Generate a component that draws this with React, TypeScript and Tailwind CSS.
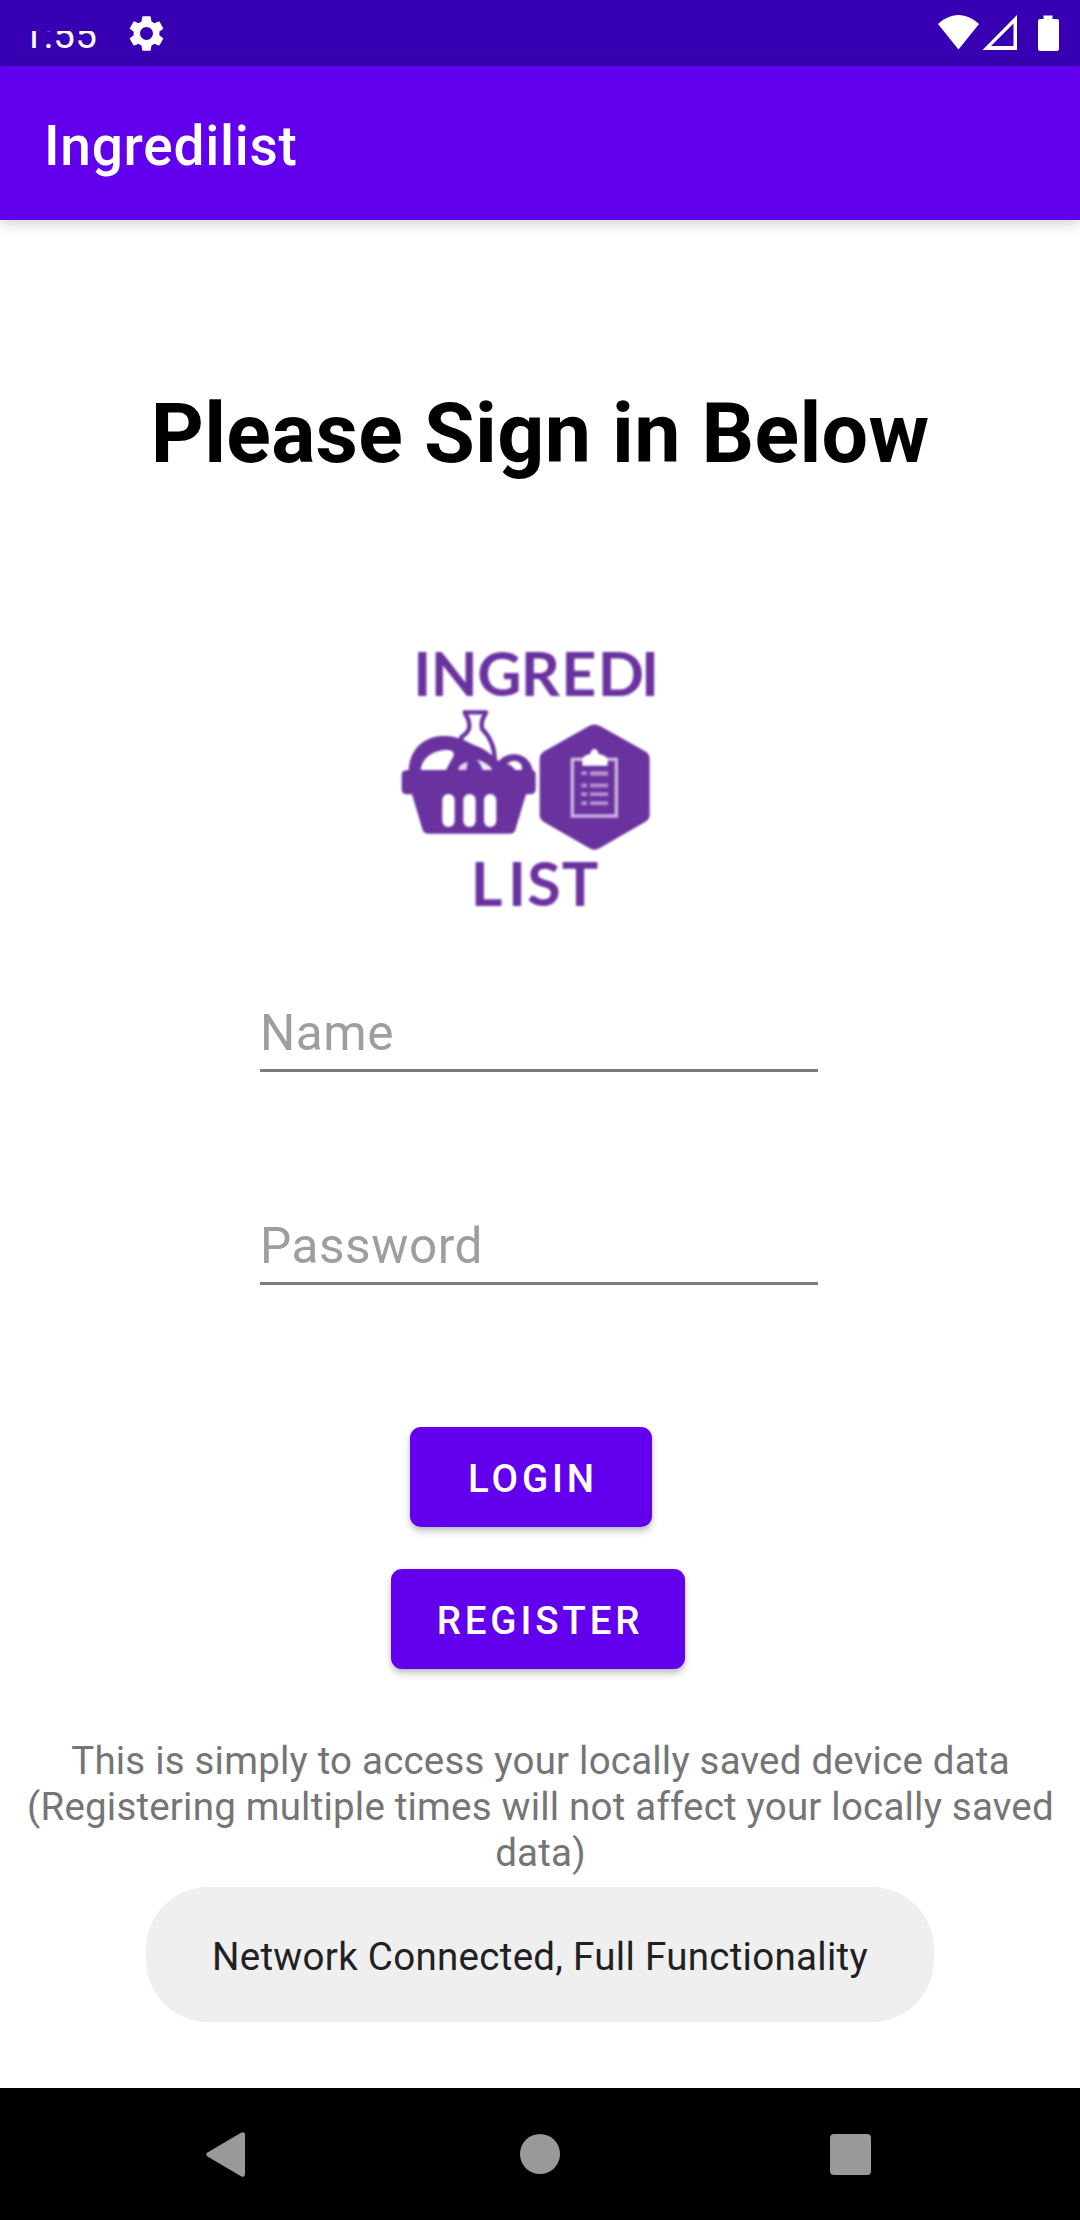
import React from "react";

function StatusBar() {
  return (
    <div className="flex h-[66px] shrink-0 items-start bg-[#3700b3] text-white">
      <div className="ml-[22px] mt-[31px] h-[30px] w-[85px] overflow-hidden">
        <div className="-mt-[19px] text-[38.5px] leading-[46px] tracking-[0.2px] whitespace-nowrap">1:55</div>
      </div>
      <svg className="ml-[18px] mt-[12px] size-[43px]" viewBox="0 0 24 24" fill="currentColor">
        <path d="M19.14 12.94c.04-.3.06-.61.06-.94 0-.32-.02-.64-.07-.94l2.03-1.58c.18-.14.23-.41.12-.61l-1.92-3.32c-.12-.22-.37-.29-.59-.22l-2.39.96c-.5-.38-1.03-.7-1.62-.94l-.36-2.54c-.04-.24-.24-.41-.48-.41h-3.84c-.24 0-.43.17-.47.41l-.36 2.54c-.59.24-1.13.57-1.62.94l-2.39-.96c-.22-.08-.47 0-.59.22L2.74 8.87c-.12.21-.08.47.12.61l2.03 1.58c-.05.3-.09.63-.09.94s.02.64.07.94l-2.03 1.58c-.18.14-.23.41-.12.61l1.92 3.32c.12.22.37.29.59.22l2.39-.96c.5.38 1.03.7 1.62.94l.36 2.54c.05.24.24.41.48.41h3.84c.24 0 .44-.17.47-.41l.36-2.54c.59-.24 1.13-.56 1.62-.94l2.39.96c.22.08.47 0 .59-.22l1.92-3.32c.12-.22.07-.47-.12-.61l-2.01-1.58zM12 15.6c-1.98 0-3.6-1.62-3.6-3.6s1.62-3.6 3.6-3.6 3.6 1.62 3.6 3.6-1.62 3.6-3.6 3.6z" />
      </svg>
      <svg className="ml-auto mr-[20px] mt-[15px] h-[37px] w-[122px]" viewBox="0 0 122 37" fill="currentColor">
        <path d="M0 9C6 3.500 13 0 20.500 0S35 3.500 41 9L20.500 34.500Z" />
        <path fillRule="evenodd" d="M44.500 35L79 0V35ZM53 31H75.500V8.500Z" />
        <path d="M105.500 .5H114.500V4H119Q121 4 121 6V34Q121 36 119 36H102Q100 36 100 34V6Q100 4 102 4H105.500Z" />
      </svg>
    </div>
  );
}

function Logo() {
  return (
    <svg className="size-[300px] blur-[1px]" viewBox="0 0 900 900" fill="#6a329f" role="img" aria-label="Ingredilist logo">
      <g fontFamily="Lato, sans-serif" fontWeight="700" fontSize="183">
        <text x="100 152 292 422 544 653 783" y="198">INGREDI</text>
        <text x="272 384 442 545" y="829">LIST</text>
      </g>
      {/* bottle behind the basket */}
      <path d="M254 247H318L314 256Q302 272 306 296Q345 335 344 392H244V322Q268 304 268 290Q268 268 258 256Z" fill="#fff" stroke="#6a329f" strokeWidth="13" strokeLinejoin="round" />
      {/* food and basket body */}
      <path d="M86 420C90 350 140 318 190 318C245 318 268 342 290 348C320 360 340 378 356 394C372 376 390 372 408 373C436 376 454 398 458 420Q467 424 467 434V478Q467 491 452 493H438L406 600Q403 611 390 611H145Q132 611 128 600L96 493H78Q65 491 65 478V434Q65 422 80 421Z" />
      <g fill="#fff">
        <path d="M122 420C126 380 165 358 205 360Q232 364 215 388L198 420Z" />
        <path d="M234 420Q238 400 262 396Q264 408 258 420Z" opacity="0.8" />
        <path d="M290 389Q326 398 337 420H308Q302 400 290 389Z" opacity="0.9" />
        <path d="M380 402Q404 384 421 400Q428 410 425 420H405Q398 406 380 402Z" />
        <rect x="187" y="492" width="37" height="99" rx="18" />
        <rect x="250" y="492" width="37" height="99" rx="18" />
        <rect x="312" y="492" width="37" height="99" rx="18" />
      </g>
      {/* clipboard inside the hexagon */}
      <path d="M627 288Q643 279 660 288L794 363Q809 371 809 386V555Q809 568 795 576L661 653Q643 665 626 653L493 577Q479 568 479 555V386Q479 372 493 364Z" />
      <rect x="577" y="388" width="132" height="170" fill="none" stroke="#cdb8df" strokeWidth="10" />
      <path d="M607 407V386Q612 375 630 373Q634 357 643 357T657 373Q676 375 683 386V407Z" fill="#fff" />
      <g fill="#b795d1">
        <rect x="604" y="424" width="17" height="11" /><rect x="630" y="424" width="54" height="13" />
        <rect x="604" y="461" width="17" height="11" /><rect x="630" y="461" width="54" height="11" />
        <rect x="604" y="487" width="17" height="11" /><rect x="630" y="487" width="54" height="11" />
        <rect x="604" y="514" width="17" height="11" /><rect x="630" y="514" width="54" height="11" />
      </g>
    </svg>
  );
}

function Field({ label, type }: { label: string; type: string }) {
  return (
    <div className="w-[558px]">
      <input
        type={type}
        placeholder={label}
        className="block h-[58px] w-full bg-transparent p-0 text-[49.5px] leading-[58px] tracking-[0.55px] text-[#212121] outline-none placeholder:text-[#9e9e9e]"
      />
      <div className="mt-[7px] h-[3px] bg-[#7c7c7c]" />
    </div>
  );
}

const buttonClass =
  "h-[100px] rounded-[11px] bg-[#6200ee] pl-[4px] pt-[3px] text-[38.5px] leading-[46px] font-medium tracking-[3.85px] text-white shadow-[0_5px_7px_rgba(0,0,0,0.2),0_1px_4px_rgba(0,0,0,0.1)]";

export default function App() {
  return (
    <div className="flex h-[2220px] w-[1080px] flex-col overflow-hidden bg-white font-[Roboto,sans-serif]">
      <StatusBar />
      <header className="flex h-[154px] shrink-0 items-center bg-[#6200ee] pl-[44px] pt-[6px] text-[55px] font-medium tracking-[0.75px] text-white shadow-[0_3px_14px_rgba(0,0,0,0.2)]">
        Ingredilist
      </header>
      <main className="flex flex-1 flex-col items-center">
        <h1 className="mt-[164px] text-[82.5px] font-bold leading-[100px] tracking-[0.31px] whitespace-nowrap text-black">Please Sign in Below</h1>
        <div className="mr-[20px] mt-[146px]">
          <Logo />
        </div>
        <div className="mr-[2px] mt-[74px] flex flex-col gap-[145px]">
          <Field label="Name" type="text" />
          <Field label="Password" type="password" />
        </div>
        <button className={`${buttonClass} mr-[18px] mt-[142px] w-[242px]`}>LOGIN</button>
        <button className={`${buttonClass} mr-[4px] mt-[42px] w-[294px]`}>REGISTER</button>
        <p className="mt-[69px] w-[1060px] pl-[1px] text-center text-[38.5px] leading-[46px] tracking-[0.2px] text-[#757575]">
          This is simply to access your locally saved device data
          <br />
          (Registering multiple times will not affect your locally saved
          <br />
          data)
        </p>
        <div className="mt-[11px] flex h-[135px] w-[788px] items-center justify-center rounded-[62px] bg-[#efefef] pt-[5px] text-[38.5px] leading-[46px] tracking-[0.3px] text-[#212121]">
          Network Connected, Full Functionality
        </div>
      </main>
      <nav className="flex h-[132px] shrink-0 items-center bg-black pl-[206px]">
        <svg className="h-[45px] w-[40px]" viewBox="0 0 40 45" fill="#999">
          <path d="M1.500 20.500L35 .8Q39 -1 39 3.500V41.500Q39 46 35 44.200L1.500 24.500Q-1 22.500 1.500 20.500Z" />
        </svg>
        <div className="ml-[274px] size-[40px] rounded-full bg-[#999]" />
        <div className="ml-[270px] size-[41px] rounded-[4px] bg-[#999]" />
      </nav>
    </div>
  );
}
